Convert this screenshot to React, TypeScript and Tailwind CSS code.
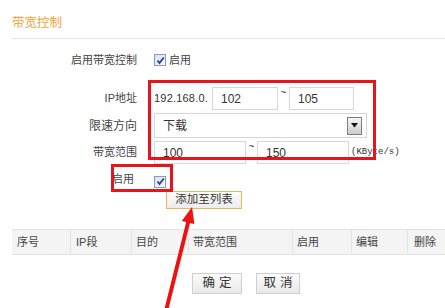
import React from "react";

function Check() {
  return (
    <span className="flex h-[12px] w-[12px] items-center justify-center border border-[#8a9bb5] bg-gradient-to-br from-[#d9e1ec] to-[#f8f9fb]">
      <svg width="9" height="9" viewBox="0 0 9 9">
        <path d="M1.5 4.5 L3.5 7 L7.8 1.5" fill="none" stroke="#2b3f98" strokeWidth="1.8" />
      </svg>
    </span>
  );
}

function Input({ value, w }: { value: string; w: string }) {
  return (
    <div className={`${w} flex h-[23px] items-center border border-[#d6d6d6] bg-white pl-[8px] text-[12px] text-[#333]`}>
      {value}
    </div>
  );
}

export default function App() {
  return (
    <div className="relative h-[308px] w-[445px] overflow-hidden bg-white font-['Liberation_Sans','Noto_Sans_CJK_SC',sans-serif] text-[#444]">
      <div className="pl-[12px]">
        <div className="h-[39px] border-b border-[#e3e3e3] pt-[14px] text-[12.5px] leading-[18px] text-[#f2a33a]">
          带宽控制
        </div>

        {/* enable bandwidth control */}
        <div className="mt-[11px] flex h-[20px] items-center text-[11px]">
          <div className="w-[125px] text-right">启用带宽控制</div>
          <div className="ml-[17px]"><Check /></div>
          <div className="ml-[3px]">启用</div>
        </div>

        {/* IP */}
        <div className="mt-[17px] flex h-[23px] items-center text-[11px]">
          <div className="w-[125px] text-right">IP地址</div>
          <div className="ml-[17px] w-[58px] text-[11px] tracking-[0.2px] text-[#333]">192.168.0.</div>
          <Input value="102" w="w-[66px]" />
          <div className="flex h-[23px] w-[11px] items-start justify-center pt-[1px] text-[10px] leading-[10px] text-[#333]">~</div>
          <Input value="105" w="w-[65px]" />
        </div>

        {/* direction */}
        <div className="mt-[3px] flex h-[25px] items-center text-[11px]">
          <div className="w-[125px] text-right text-[12px]">限速方向</div>
          <div className="ml-[17px] flex h-[25px] w-[213px] items-center justify-between border border-[#d6d6d6] pl-[8px] pr-[4px] text-[12px] text-[#333]">
            <span>下载</span>
            <span className="flex h-[18px] w-[15px] items-center justify-center border border-[#7e7e7e] bg-gradient-to-b from-[#f6f6f6] to-[#cdcdcd]">
              <svg width="7" height="5" viewBox="0 0 7 5">
                <path d="M0 0 H7 L3.5 4.5 Z" fill="#111" />
              </svg>
            </span>
          </div>
        </div>

        {/* bandwidth */}
        <div className="mt-[3px] flex h-[23px] items-center text-[11px]">
          <div className="w-[125px] text-right">带宽范围</div>
          <div className="ml-[17px]"><Input value="100" w="w-[92px]" /></div>
          <div className="flex h-[23px] w-[11px] items-start justify-center pt-[1px] text-[10px] leading-[10px] text-[#333]">~</div>
          <Input value="150" w="w-[92px]" />
          <div className="ml-[2px] font-['Liberation_Mono',monospace] text-[9px] text-[#333]">(KByte/s)</div>
        </div>

        {/* enable */}
        <div className="mt-[8px] flex h-[15px] items-center text-[11px]">
          <div className="w-[122px] text-right">启用</div>
          <div className="ml-[20px] mt-[4px]"><Check /></div>
        </div>

        {/* add button */}
        <div className="mt-[4px] flex">
          <div className="ml-[154px] flex h-[18px] w-[76px] items-center justify-center border border-[#f0b35a] bg-gradient-to-b from-[#fdfdfd] to-[#ececec] text-[11.5px] text-[#333]">
            添加至列表
          </div>
        </div>

        {/* table header */}
        <div className="mt-[20px] flex h-[26px] items-center border-y border-[#e4e4e4] bg-[#f4f4f4] text-[11px] text-[#444]">
          <div className="flex h-full w-[59px] items-center border-r border-[#e4e4e4] pl-[5px]">序号</div>
          <div className="flex h-full w-[61px] items-center border-r border-[#e4e4e4] pl-[5px]">IP段</div>
          <div className="flex h-full w-[57px] items-center border-r border-[#e4e4e4] pl-[4px]">目的</div>
          <div className="flex h-full w-[104px] items-center border-r border-[#e4e4e4] pl-[4px]">带宽范围</div>
          <div className="flex h-full w-[59px] items-center border-r border-[#e4e4e4] pl-[4px]">启用</div>
          <div className="flex h-full w-[56px] items-center border-r border-[#e4e4e4] pl-[4px]">编辑</div>
          <div className="flex h-full flex-1 items-center pl-[6px]">删除</div>
        </div>

        {/* buttons */}
        <div className="mt-[18px] flex">
          <div className="ml-[180px] flex h-[21px] w-[50px] items-center justify-center border border-[#cfcfcf] bg-gradient-to-b from-[#fbfbfb] to-[#e9e9e9] text-[12.5px] tracking-[4px] text-[#333]">
            <span className="pl-[4px]">确定</span>
          </div>
          <div className="ml-[14px] flex h-[21px] w-[44px] items-center justify-center border border-[#cfcfcf] bg-gradient-to-b from-[#fbfbfb] to-[#e9e9e9] text-[12.5px] tracking-[4px] text-[#333]">
            <span className="pl-[4px]">取消</span>
          </div>
        </div>
      </div>

      {/* annotations */}
      <div className="pointer-events-none absolute left-[148px] top-[80px] h-[80px] w-[228px] border-[3px] border-[#e8141c]" />
      <div className="pointer-events-none absolute left-[111px] top-[164px] h-[28px] w-[62px] border-[3px] border-[#e8141c]" />
      <svg className="pointer-events-none absolute left-0 top-0" width="445" height="308" viewBox="0 0 445 308">
        <polygon
          points="192,207 194.4,224.1 190,223 168.1,310.5 164.3,309.5 186.2,222 181.8,220.9"
          fill="#ee1111"
        />
      </svg>
    </div>
  );
}
